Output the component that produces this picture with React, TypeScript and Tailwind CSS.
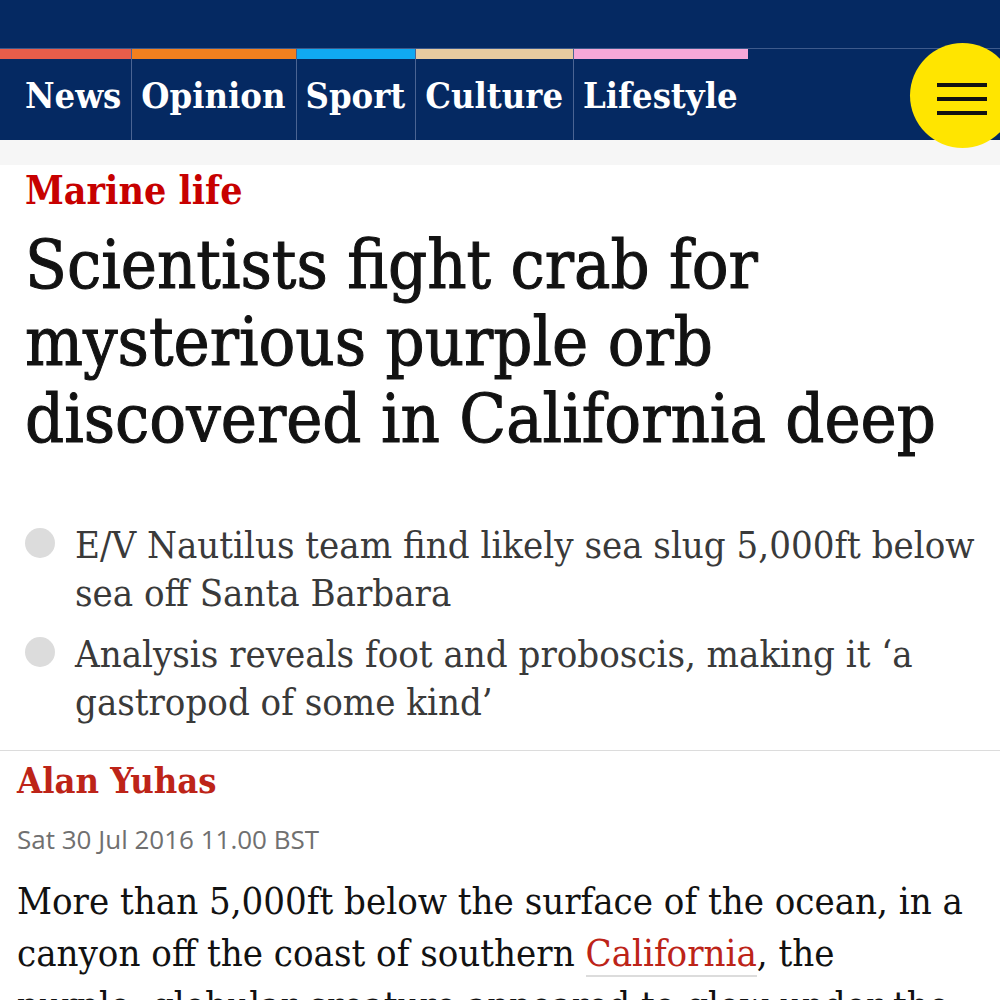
import React from 'react'

const navItems = [
  { label: 'News', bar: 'bg-[#e85d4a]', first: true },
  { label: 'Opinion', bar: 'bg-[#f2801f]' },
  { label: 'Sport', bar: 'bg-[#10a9f2]' },
  { label: 'Culture', bar: 'bg-[#e7cba0]' },
  { label: 'Lifestyle', bar: 'bg-[#f6a8d8]' },
]

// DejaVu Serif Condensed sits closest to the Egyptian slab faces of the original
const egyptian = "font-['DejaVu_Serif_Condensed','DejaVu_Serif',serif]"

function Header() {
  return (
    <header className="relative bg-[#052962] h-[140px] flex flex-col">
      <div className="h-[48px]" />
      <nav className="flex border-t border-[#3e5a8c] flex-1">
        {navItems.map((item, i) => (
          <div
            key={item.label}
            className={`flex flex-col ${i > 0 ? 'border-l border-[#4b6493]' : ''}`}
          >
            <div className={`h-[10px] ${item.bar}`} />
            <div
              className={`${egyptian} font-bold text-white text-[36px] leading-[36px] pt-[18px] whitespace-nowrap ${
                item.first ? 'pl-[25px] pr-[10px]' : 'pl-[9px] pr-[10px]'
              }`}
            >
              {item.label}
            </div>
          </div>
        ))}
      </nav>
      <button
        aria-label="Menu"
        className="absolute left-[910px] top-[43px] w-[105px] h-[105px] rounded-full bg-[#ffe500] flex flex-col items-start justify-center gap-[10px] pl-[27px] pt-[6px] z-10"
      >
        <span className="block w-[50px] h-[4px] bg-[#121212]" />
        <span className="block w-[50px] h-[4px] bg-[#121212]" />
        <span className="block w-[50px] h-[4px] bg-[#121212]" />
      </button>
    </header>
  )
}

function Bullet({ children }: { children: React.ReactNode }) {
  return (
    <li className="flex items-start">
      <span className="mt-[7px] mr-[20px] shrink-0 w-[30px] h-[30px] rounded-full bg-[#dcdcdc]" />
      <span className={`${egyptian} text-[38px] leading-[48px] text-[#3a3a3a] whitespace-nowrap`}>
        {children}
      </span>
    </li>
  )
}

export default function App() {
  return (
    <div className="w-[1000px] h-[1000px] overflow-hidden bg-white">
      <Header />
      <div className="h-[25px] bg-[#f6f6f6]" />

      <div className="pl-[25px] pt-[6px]">
        <div className={`${egyptian} font-bold text-[#c70000] text-[39px] leading-[39px] whitespace-nowrap`}>
          Marine life
        </div>
        <h1
          className={`${egyptian} text-[#121212] text-[68px] leading-[77px] mt-[16px] whitespace-nowrap [-webkit-text-stroke:1px_#121212]`}
        >
          Scientists fight crab for
          <br />
          mysterious purple orb
          <br />
          discovered in California deep
        </h1>

        <ul className="mt-[64px] flex flex-col gap-[13px]">
          <Bullet>
            E/V Nautilus team find likely sea slug 5,000ft below
            <br />
            sea off Santa Barbara
          </Bullet>
          <Bullet>
            Analysis reveals foot and proboscis, making it ‘a
            <br />
            gastropod of some kind’
          </Bullet>
        </ul>
      </div>

      <div className="mt-[24px] border-t border-[#dcdcdc] px-[17px]">
        <div className={`${egyptian} font-bold text-[#bd2418] text-[36px] leading-[36px] mt-[11px] whitespace-nowrap`}>
          Alan Yuhas
        </div>
        <div className="font-['Open_Sans',sans-serif] text-[#707070] text-[26px] leading-[26px] mt-[28px] whitespace-nowrap">
          Sat 30 Jul 2016 11.00 BST
        </div>
        <p className={`${egyptian} text-[#121212] text-[38px] leading-[52px] mt-[23px] whitespace-nowrap`}>
          More than 5,000ft below the surface of the ocean, in a
          <br />
          canyon off the coast of southern{' '}
          <a className="text-[#bd2418] border-b-2 border-[#dcdcdc]">California</a>, the
          <br />
          purple, globular creature appeared to glow under the
        </p>
      </div>
    </div>
  )
}
